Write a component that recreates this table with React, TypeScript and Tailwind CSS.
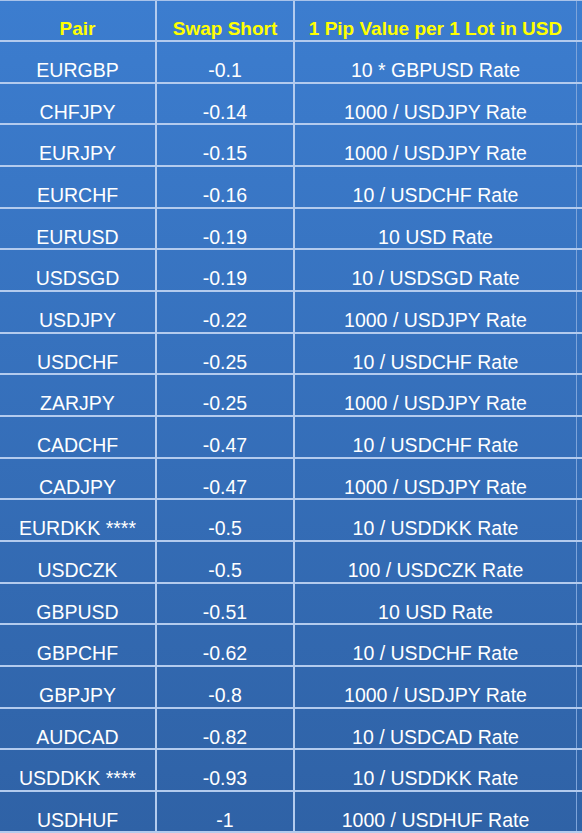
const rows: [string, string, string][] = [
  ['EURGBP', '-0.1', '10 * GBPUSD Rate'],
  ['CHFJPY', '-0.14', '1000 / USDJPY Rate'],
  ['EURJPY', '-0.15', '1000 / USDJPY Rate'],
  ['EURCHF', '-0.16', '10 / USDCHF Rate'],
  ['EURUSD', '-0.19', '10 USD Rate'],
  ['USDSGD', '-0.19', '10 / USDSGD Rate'],
  ['USDJPY', '-0.22', '1000 / USDJPY Rate'],
  ['USDCHF', '-0.25', '10 / USDCHF Rate'],
  ['ZARJPY', '-0.25', '1000 / USDJPY Rate'],
  ['CADCHF', '-0.47', '10 / USDCHF Rate'],
  ['CADJPY', '-0.47', '1000 / USDJPY Rate'],
  ['EURDKK ****', '-0.5', '10 / USDDKK Rate'],
  ['USDCZK', '-0.5', '100 / USDCZK Rate'],
  ['GBPUSD', '-0.51', '10 USD Rate'],
  ['GBPCHF', '-0.62', '10 / USDCHF Rate'],
  ['GBPJPY', '-0.8', '1000 / USDJPY Rate'],
  ['AUDCAD', '-0.82', '10 / USDCAD Rate'],
  ['USDDKK ****', '-0.93', '10 / USDDKK Rate'],
  ['USDHUF', '-1', '1000 / USDHUF Rate'],
];

export default function App() {
  return (
    <div
      className="w-[582px] h-[833px] overflow-hidden bg-gradient-to-b from-[#3c7dcf] to-[#2f62a6] border-t border-[#a9c3ea]"
      style={{ fontFamily: '"Liberation Sans", Arial, sans-serif' }}
    >
      {/* Header */}
      <div className="flex h-[41px] border-b-2 border-[#b3cbee] text-[19px] leading-[20px] font-bold text-[#ffff00]">
        <div className="w-[157px] flex items-end justify-center pb-px border-r-2 border-[#b3cbee]">Pair</div>
        <div className="w-[138px] flex items-end justify-center pb-px border-r-2 border-[#b3cbee]">Swap Short</div>
        <div className="w-[282px] flex items-end justify-center pb-px border-r border-[#7ea4da]">1 Pip Value per 1 Lot in USD</div>
      </div>

      {rows.map(([pair, swap, pip]) => (
        <div key={pair} className="flex h-[41.67px] border-b-2 border-[#b3cbee] text-[19.5px] leading-[20px] text-white">
          <div className="w-[157px] flex items-end justify-center pb-[1.5px] border-r-2 border-[#b3cbee]">{pair}</div>
          <div className="w-[138px] flex items-end justify-center pb-[1.5px] border-r-2 border-[#b3cbee]">{swap}</div>
          <div className="w-[282px] flex items-end justify-center pb-[1.5px] border-r border-[#7ea4da]">{pip}</div>
        </div>
      ))}
    </div>
  );
}
